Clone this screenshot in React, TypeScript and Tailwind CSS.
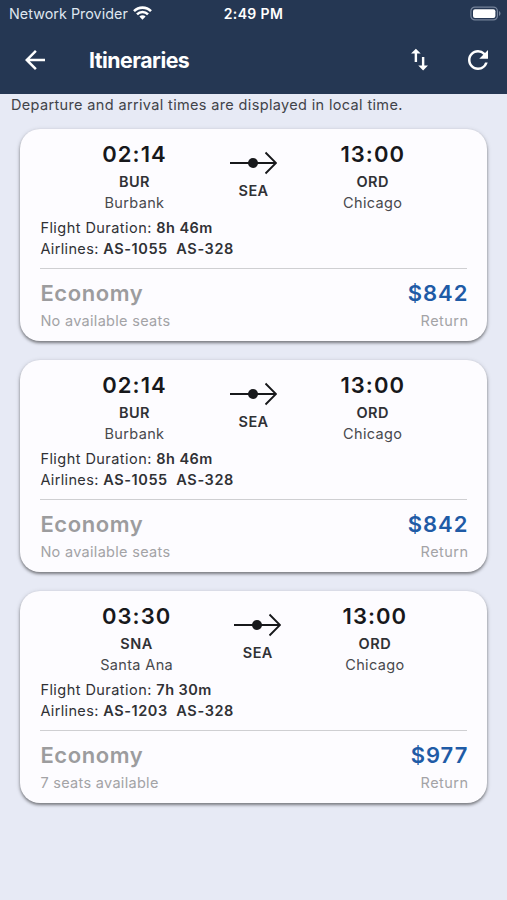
type Itinerary = {
  departure: string;
  origin: string;
  originCity: string;
  arrival: string;
  duration: string;
  flights: string[];
  seats: string;
  price: string;
};

const itineraries: Itinerary[] = [
  { departure: '02:14', origin: 'BUR', originCity: 'Burbank', arrival: '13:00', duration: '8h 46m', flights: ['AS-1055', 'AS-328'], seats: 'No available seats', price: '$842' },
  { departure: '02:14', origin: 'BUR', originCity: 'Burbank', arrival: '13:00', duration: '8h 46m', flights: ['AS-1055', 'AS-328'], seats: 'No available seats', price: '$842' },
  { departure: '03:30', origin: 'SNA', originCity: 'Santa Ana', arrival: '13:00', duration: '7h 30m', flights: ['AS-1203', 'AS-328'], seats: '7 seats available', price: '$977' },
];

function StatusBar() {
  return (
    <div className="grid h-[28px] grid-cols-3 items-center pl-[9px] pr-[8px] text-[14px] leading-[28px]">
      <div className="flex items-center gap-[5px] whitespace-nowrap text-[#dfe6ef]">
        <span className="text-[14.3px] tracking-[0.05px]">Network Provider</span>
        <svg className="-mt-[2px] h-[14px] w-[19px]" viewBox="0 0 19 14" fill="none" stroke="#fff" strokeWidth="2.6">
          <path d="M1 5.1a12.1 12.1 0 0 1 17 0" />
          <path d="M4 8.3a7.8 7.8 0 0 1 11 0" />
          <path d="M9.5 13.7 6.4 10.6a4.4 4.4 0 0 1 6.2 0Z" fill="#fff" stroke="none" />
        </svg>
      </div>
      <span className="-ml-px text-center font-semibold tracking-[0.35px]">2:49 PM</span>
      <svg className="-mr-[2px] -mt-[2px] h-[15px] w-[31px] justify-self-end" viewBox="0 0 31 15">
        <rect x="0.9" y="1.1" width="26.5" height="12.8" rx="4" fill="none" stroke="#75839a" strokeWidth="1.2" />
        <rect x="3" y="3.2" width="22.4" height="8.8" rx="2" fill="#fff" />
        <path d="M29 5v5q1.5-.8 1.5-2.5T29 5Z" fill="#75839a" />
      </svg>
    </div>
  );
}

function AppBar() {
  return (
    <div className="flex h-[65px] items-center pl-[20px] pr-[14px]">
      <svg className="-mt-[2px] size-[30px]" viewBox="0 0 24 24" fill="#fff">
        <path d="M20 11H7.83l5.59-5.59L12 4l-8 8 8 8 1.41-1.41L7.83 13H20v-2z" />
      </svg>
      <h1 className="ml-[39px] flex-1 text-[21.3px] font-bold tracking-[-0.5px]">Itineraries</h1>
      <svg className="-mt-[2px] mr-[29px] size-[29px]" viewBox="0 0 24 24" fill="#fff">
        <path d="M16 17.01V10h-2v7.01h-3L15 21l4-3.99h-3zM9 3 5 6.99h3V14h2V6.99h3L9 3z" />
      </svg>
      <svg className="-mt-[2px] size-[30px]" viewBox="0 0 24 24" fill="#fff">
        <path d="M17.65 6.35A7.958 7.958 0 0 0 12 4c-4.42 0-7.99 3.58-7.99 8s3.57 8 7.99 8c3.73 0 6.84-2.55 7.73-6h-2.08A5.99 5.99 0 0 1 12 18c-3.31 0-6-2.69-6-6s2.69-6 6-6c1.66 0 3.14.69 4.22 1.78L13 11h7V4l-2.35 2.35z" />
      </svg>
    </div>
  );
}

function Stop({ time, code, city }: { time: string; code: string; city: string }) {
  return (
    <div className="flex flex-col items-center">
      <span className="text-[22px] font-semibold leading-[28px] tracking-[1.05px] text-[#17181b]">{time}</span>
      <span className="mt-[3px] text-[14.5px] font-semibold leading-[21px] tracking-[0.5px]">{code}</span>
      <span className="text-[14.5px] leading-[21px] tracking-[0.35px] text-[#48494d]">{city}</span>
    </div>
  );
}

function Connection() {
  return (
    <div className="flex flex-col items-center pt-[11px]">
      <svg className="h-[24px] w-[47px]" viewBox="0 0 47 24" fill="none" stroke="#17181b" strokeWidth="1.9">
        <path d="M0 12h46M35.5 1.5 46 12 35.5 22.5" />
        <circle cx="23" cy="12" r="5" fill="#17181b" stroke="none" />
      </svg>
      <span className="mt-[5px] text-[14.5px] font-semibold leading-[21px] tracking-[0.4px]">SEA</span>
    </div>
  );
}

function ItineraryCard({ item }: { item: Itinerary }) {
  return (
    <article className="h-[211.5px] rounded-[20px] bg-[#fdfcff] px-[20px] pt-[11px] text-[14.5px] leading-[21px] tracking-[0.45px] text-[#303135] shadow-[0_2px_3px_rgba(0,0,0,0.4),0_1px_5px_rgba(0,0,0,0.16)]">
      <div className="-ml-[1.5px] -mr-px flex justify-evenly">
        <Stop time={item.departure} code={item.origin} city={item.originCity} />
        <Connection />
        <Stop time={item.arrival} code="ORD" city="Chicago" />
      </div>
      <p className="mt-[4px]">Flight Duration: <b className="font-semibold">{item.duration}</b></p>
      <p className="tracking-[0.35px]">Airlines: <b className="whitespace-pre font-semibold tracking-[0.6px]">{item.flights.join('  ')}</b></p>
      <div className="mt-[9px] flex justify-between border-t-[1.5px] border-[#cfcfd2] pt-[10px]">
        <div>
          <p className="text-[22px] font-semibold leading-[28px] tracking-[0.6px] text-[#9c9c9e]">Economy</p>
          <p className="mt-[3px] tracking-[0.3px] text-[#a3a3a6]">{item.seats}</p>
        </div>
        <div className="-mr-[1px] text-right">
          <p className="text-[22px] font-semibold leading-[28px] tracking-[1px] text-[#1f5ba6]">{item.price}</p>
          <p className="mt-[3px] text-[#a3a3a6]">Return</p>
        </div>
      </div>
    </article>
  );
}

export default function App() {
  return (
    <div className="h-[900px] w-[507px] overflow-hidden bg-[#e7eaf5] font-['Inter',sans-serif]">
      <header className="h-[93.5px] bg-[#253753] text-white">
        <StatusBar />
        <AppBar />
      </header>
      <p className="h-[35.5px] pl-[11px] text-[14.5px] leading-[21.5px] tracking-[0.35px] text-[#414349]">
        Departure and arrival times are displayed in local time.
      </p>
      <main className="flex flex-col gap-[19.5px] pl-[20.4px] pr-[19.6px]">
        {itineraries.map((item, index) => (
          <ItineraryCard key={index} item={item} />
        ))}
      </main>
    </div>
  );
}
